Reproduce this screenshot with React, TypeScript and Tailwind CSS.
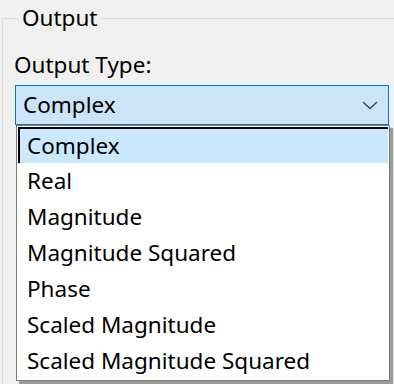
const options = [
  "Complex",
  "Real",
  "Magnitude",
  "Magnitude Squared",
  "Phase",
  "Scaled Magnitude",
  "Scaled Magnitude Squared",
];

export default function App() {
  const selected = 0;

  return (
    <div
      className="relative h-[384px] w-[394px] overflow-hidden bg-[#f0f0f0] text-[22.5px] text-black"
      style={{ fontFamily: '"Noto Sans", "Open Sans", sans-serif' }}
    >
      {/* group box */}
      <div className="relative ml-[2px] mt-[18px] h-[366px] border-l border-t border-[#dcdcdc]">
        <span className="absolute left-[15px] top-[-17px] bg-[#f0f0f0] px-[4px] leading-[32px]">
          Output
        </span>

        <div className="pl-[11px] pt-[32px] leading-[28px]">Output Type:</div>

        {/* combo box */}
        <div className="relative ml-[12px] mt-[6px] flex h-[40px] w-[374px] items-center justify-between border border-[#0078d7] bg-[#cce4f7] pl-[7px] pr-[9px]">
          <span className="leading-[28px]">Complex</span>
          <svg width="16" height="10" viewBox="0 0 16 10" className="mr-[1px]">
            <path d="M1 2 L8 8.5 L15 2" fill="none" stroke="#404040" strokeWidth="1.3" />
          </svg>

          {/* dropdown list */}
          <div className="absolute left-[0px] top-[39px] w-[374px] border border-[#7a7a7a] bg-white shadow-[3px_3px_1px_rgba(0,0,0,0.35)]">
            <div className="p-px">
              {options.map((o, i) => (
                <div
                  key={o}
                  className={
                    i === selected
                      ? "flex h-[36px] items-center border-l-2 border-t-2 border-black bg-[#cce8ff] pl-[7px]"
                      : "flex h-[36px] items-center pl-[9px]"
                  }
                >
                  {o}
                </div>
              ))}
            </div>
          </div>
        </div>
      </div>
    </div>
  );
}
